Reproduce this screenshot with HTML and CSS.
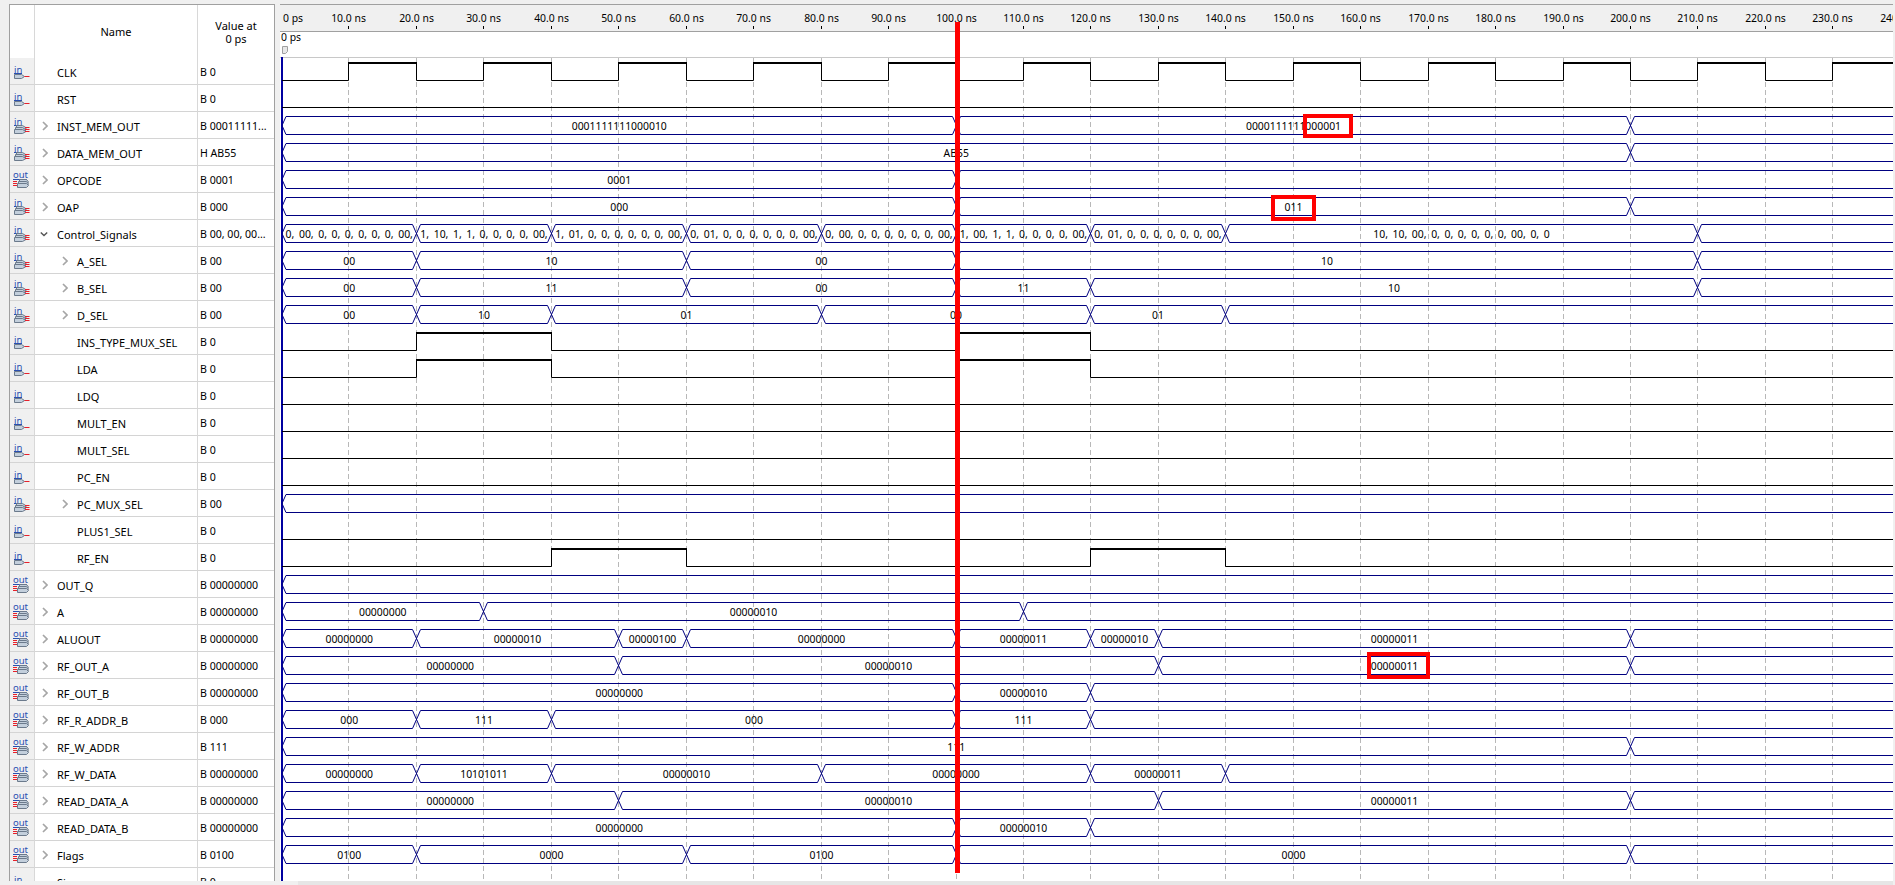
FILE: index.html
```html
<!DOCTYPE html>
<html lang="en">
<head>
  <meta charset="UTF-8">
  <title>Simulation Waveform Editor</title>
  <link rel="stylesheet" href="styles.css">
</head>
<body>

  <svg class="defs" aria-hidden="true">
    <symbol id="pin-in" viewBox="0 0 24 26">
      <text class="pin-text" x="4" y="15">in</text>
      <path class="pin-line" d="M4 15.500h8"/>
      <path class="pin-body" d="M4.500 16.500h7l3 2-3 2h-7z"/>
      <path class="pin-red" d="M14.500 18.500h5"/>
    </symbol>
    <symbol id="bus-in" viewBox="0 0 24 26">
      <text class="pin-text" x="4" y="12.500">in</text>
      <path class="pin-line" d="M4 13.500h8"/>
      <path class="pin-body" d="M6.500 13.500h6l4 2.500-4 2.500h-6z"/>
      <path class="pin-body" d="M5.500 15.500h7l3.500 2.500-3.500 2.500h-7z"/>
      <path class="pin-body" d="M4.500 17.500h8l3.500 2-3.500 2h-8z"/>
      <path class="pin-red" d="M15 15.500h4.500M15 17.500h4.500M15 19.500h4.500"/>
    </symbol>
    <symbol id="bus-out" viewBox="0 0 24 26">
      <text class="pin-text" x="3" y="12">out</text>
      <path class="pin-line" d="M3 13.500h14"/>
      <path class="pin-body" d="M9.500 13.500h7l2 2.500-2 2.500h-7z"/>
      <path class="pin-body" d="M8.500 15.500h8l2 2.500-2 2.500h-8z"/>
      <path class="pin-body" d="M7.500 17.500h9l2 2-2 2h-9z"/>
      <path class="pin-red" d="M3 15.500h4M3 17.500h4M3 19.500h4"/>
    </symbol>
    <symbol id="tw-right" viewBox="0 0 6 10">
      <path d="M1 1l4 4-4 4" fill="none" stroke="#a6a6a6" stroke-width="1.700"/>
    </symbol>
    <symbol id="tw-down" viewBox="0 0 10 6">
      <path d="M1 1l4 4 4-4" fill="none" stroke="#555" stroke-width="1.700"/>
    </symbol>
  </svg>

  <main class="editor">
    <section class="names">
      <header class="names-head">
        <div class="cell-icon"></div>
        <div class="cell-name">Name</div>
        <div class="cell-value">Value at<br>0 ps</div>
      </header>

      <div class="row"><div class="cell-icon"><svg><use href="#pin-in"/></svg></div><div class="cell-name"><i class="tw"></i>CLK</div><div class="cell-value">B 0</div></div>
      <div class="row"><div class="cell-icon"><svg><use href="#pin-in"/></svg></div><div class="cell-name"><i class="tw"></i>RST</div><div class="cell-value">B 0</div></div>
      <div class="row"><div class="cell-icon"><svg><use href="#bus-in"/></svg></div><div class="cell-name"><i class="tw"><svg><use href="#tw-right"/></svg></i>INST_MEM_OUT</div><div class="cell-value">B 00011111...</div></div>
      <div class="row"><div class="cell-icon"><svg><use href="#bus-in"/></svg></div><div class="cell-name"><i class="tw"><svg><use href="#tw-right"/></svg></i>DATA_MEM_OUT</div><div class="cell-value">H AB55</div></div>
      <div class="row"><div class="cell-icon"><svg><use href="#bus-out"/></svg></div><div class="cell-name"><i class="tw"><svg><use href="#tw-right"/></svg></i>OPCODE</div><div class="cell-value">B 0001</div></div>
      <div class="row"><div class="cell-icon"><svg><use href="#bus-in"/></svg></div><div class="cell-name"><i class="tw"><svg><use href="#tw-right"/></svg></i>OAP</div><div class="cell-value">B 000</div></div>
      <div class="row"><div class="cell-icon"><svg><use href="#bus-in"/></svg></div><div class="cell-name"><i class="tw tw-open"><svg><use href="#tw-down"/></svg></i>Control_Signals</div><div class="cell-value">B 00, 00, 00...</div></div>
      <div class="row"><div class="cell-icon"><svg><use href="#bus-in"/></svg></div><div class="cell-name sub"><i class="tw"><svg><use href="#tw-right"/></svg></i>A_SEL</div><div class="cell-value">B 00</div></div>
      <div class="row"><div class="cell-icon"><svg><use href="#bus-in"/></svg></div><div class="cell-name sub"><i class="tw"><svg><use href="#tw-right"/></svg></i>B_SEL</div><div class="cell-value">B 00</div></div>
      <div class="row"><div class="cell-icon"><svg><use href="#bus-in"/></svg></div><div class="cell-name sub"><i class="tw"><svg><use href="#tw-right"/></svg></i>D_SEL</div><div class="cell-value">B 00</div></div>
      <div class="row"><div class="cell-icon"><svg><use href="#pin-in"/></svg></div><div class="cell-name sub"><i class="tw"></i>INS_TYPE_MUX_SEL</div><div class="cell-value">B 0</div></div>
      <div class="row"><div class="cell-icon"><svg><use href="#pin-in"/></svg></div><div class="cell-name sub"><i class="tw"></i>LDA</div><div class="cell-value">B 0</div></div>
      <div class="row"><div class="cell-icon"><svg><use href="#pin-in"/></svg></div><div class="cell-name sub"><i class="tw"></i>LDQ</div><div class="cell-value">B 0</div></div>
      <div class="row"><div class="cell-icon"><svg><use href="#pin-in"/></svg></div><div class="cell-name sub"><i class="tw"></i>MULT_EN</div><div class="cell-value">B 0</div></div>
      <div class="row"><div class="cell-icon"><svg><use href="#pin-in"/></svg></div><div class="cell-name sub"><i class="tw"></i>MULT_SEL</div><div class="cell-value">B 0</div></div>
      <div class="row"><div class="cell-icon"><svg><use href="#pin-in"/></svg></div><div class="cell-name sub"><i class="tw"></i>PC_EN</div><div class="cell-value">B 0</div></div>
      <div class="row"><div class="cell-icon"><svg><use href="#bus-in"/></svg></div><div class="cell-name sub"><i class="tw"><svg><use href="#tw-right"/></svg></i>PC_MUX_SEL</div><div class="cell-value">B 00</div></div>
      <div class="row"><div class="cell-icon"><svg><use href="#pin-in"/></svg></div><div class="cell-name sub"><i class="tw"></i>PLUS1_SEL</div><div class="cell-value">B 0</div></div>
      <div class="row"><div class="cell-icon"><svg><use href="#pin-in"/></svg></div><div class="cell-name sub"><i class="tw"></i>RF_EN</div><div class="cell-value">B 0</div></div>
      <div class="row"><div class="cell-icon"><svg><use href="#bus-out"/></svg></div><div class="cell-name"><i class="tw"><svg><use href="#tw-right"/></svg></i>OUT_Q</div><div class="cell-value">B 00000000</div></div>
      <div class="row"><div class="cell-icon"><svg><use href="#bus-out"/></svg></div><div class="cell-name"><i class="tw"><svg><use href="#tw-right"/></svg></i>A</div><div class="cell-value">B 00000000</div></div>
      <div class="row"><div class="cell-icon"><svg><use href="#bus-out"/></svg></div><div class="cell-name"><i class="tw"><svg><use href="#tw-right"/></svg></i>ALUOUT</div><div class="cell-value">B 00000000</div></div>
      <div class="row"><div class="cell-icon"><svg><use href="#bus-out"/></svg></div><div class="cell-name"><i class="tw"><svg><use href="#tw-right"/></svg></i>RF_OUT_A</div><div class="cell-value">B 00000000</div></div>
      <div class="row"><div class="cell-icon"><svg><use href="#bus-out"/></svg></div><div class="cell-name"><i class="tw"><svg><use href="#tw-right"/></svg></i>RF_OUT_B</div><div class="cell-value">B 00000000</div></div>
      <div class="row"><div class="cell-icon"><svg><use href="#bus-out"/></svg></div><div class="cell-name"><i class="tw"><svg><use href="#tw-right"/></svg></i>RF_R_ADDR_B</div><div class="cell-value">B 000</div></div>
      <div class="row"><div class="cell-icon"><svg><use href="#bus-out"/></svg></div><div class="cell-name"><i class="tw"><svg><use href="#tw-right"/></svg></i>RF_W_ADDR</div><div class="cell-value">B 111</div></div>
      <div class="row"><div class="cell-icon"><svg><use href="#bus-out"/></svg></div><div class="cell-name"><i class="tw"><svg><use href="#tw-right"/></svg></i>RF_W_DATA</div><div class="cell-value">B 00000000</div></div>
      <div class="row"><div class="cell-icon"><svg><use href="#bus-out"/></svg></div><div class="cell-name"><i class="tw"><svg><use href="#tw-right"/></svg></i>READ_DATA_A</div><div class="cell-value">B 00000000</div></div>
      <div class="row"><div class="cell-icon"><svg><use href="#bus-out"/></svg></div><div class="cell-name"><i class="tw"><svg><use href="#tw-right"/></svg></i>READ_DATA_B</div><div class="cell-value">B 00000000</div></div>
      <div class="row"><div class="cell-icon"><svg><use href="#bus-out"/></svg></div><div class="cell-name"><i class="tw"><svg><use href="#tw-right"/></svg></i>Flags</div><div class="cell-value">B 0100</div></div>
      <div class="row"><div class="cell-icon"><svg><use href="#pin-in"/></svg></div><div class="cell-name"><i class="tw"></i>Sign</div><div class="cell-value">B 0</div></div>
    </section>

    <section class="waves">
      <svg id="chart" class="chart" viewBox="280 5 1613 876" width="1613" height="876"></svg>
      <div class="hscroll"><div class="hscroll-thumb"></div></div>
    </section>
  </main>

  <script src="waves.js"></script>

</body>
</html>
```

FILE: styles.css
```css
* {
  box-sizing: border-box;
}

html,
body {
  height: 100%;
  margin: 0;
  overflow: hidden;
}

body {
  background: #f0f0f0;
  color: #000;
  font-family: "Noto Sans", sans-serif;
  font-size: 11px;
}

.defs {
  display: none;
}

.editor {
  display: flex;
  gap: 5px;
  height: 885px;
  padding: 4px 0 0 9px;
}

/* left table */
.names {
  background: #fff;
  border-left: 1px solid #a0a0a0;
  border-right: 1px solid #a0a0a0;
  border-top: 1px solid #a0a0a0;
  flex: none;
  height: 877px;
  overflow: hidden;
  width: 266px;
}

.names-head {
  display: flex;
  height: 53px;
  text-align: center;
}

.names-head .cell-icon {
  background: #fff;
  border-bottom: 0;
}

.names-head .cell-name,
.names-head .cell-value {
  align-items: center;
  border-bottom: 0;
  display: flex;
  font-size: 11px;
  height: 100%;
  justify-content: center;
  line-height: 13px;
  padding: 0;
}

.row {
  display: flex;
  height: 27px;
}

.cell-icon {
  background: #f0f0f0;
  border-bottom: 1px solid #d4d4d4;
  border-right: 1px solid #d8d8d8;
  flex: none;
  width: 25px;
}

.cell-icon svg {
  display: block;
  height: 26px;
  width: 24px;
}

.cell-name {
  align-items: center;
  border-bottom: 1px solid #d4d4d4;
  border-right: 1px solid #d8d8d8;
  display: flex;
  flex: none;
  padding: 2px 0 0 7px;
  white-space: nowrap;
  width: 163px;
}

.cell-name.sub {
  padding-left: 27px;
}

.cell-value {
  align-items: center;
  border-bottom: 1px solid #d4d4d4;
  display: flex;
  flex: 1;
  font-size: 10.600px;
  padding: 2px 0 0 2px;
  white-space: nowrap;
}

.tw {
  align-items: center;
  display: flex;
  flex: none;
  height: 10px;
  margin-right: 9px;
  width: 6px;
}

.tw svg {
  display: block;
  height: 10px;
  width: 6px;
}

.tw-open svg {
  height: 6px;
  margin-left: -2px;
  width: 10px;
}

/* pin icons */
.pin-text {
  fill: #2a4fb0;
  font-family: "Noto Sans", sans-serif;
  font-size: 9.500px;
}

.pin-line {
  fill: none;
  stroke: #2a4fb0;
  stroke-width: 1;
}

.pin-body {
  fill: #c3cfdc;
  stroke: #6b7a8c;
  stroke-width: 1;
}

.pin-red {
  fill: none;
  stroke: #e8202a;
  stroke-width: 1;
}

/* wave panel */
.waves {
  background: #fff;
  border-top: 1px solid #a0a0a0;
  flex: none;
  height: 881px;
  overflow: hidden;
  width: 1613px;
}

.chart {
  display: block;
}

.hscroll {
  background: #f0f0f0;
  height: 4px;
  padding-left: 18px;
}

.hscroll-thumb {
  background: #e6e6e6;
  height: 4px;
}

.ruler-bg {
  fill: #f0f0f0;
}

.ruler-line {
  stroke: #a0a0a0;
}

.cursor-line {
  stroke: #c8c8c8;
}

.tick {
  stroke: #000;
}

.grid {
  stroke: #b8b8b8;
  stroke-dasharray: 5 3;
}

.time-axis {
  stroke: #0000a0;
  stroke-width: 2;
}

.label {
  fill: #000;
  font-family: "Noto Sans", sans-serif;
  font-size: 10.400px;
}

.label-list {
  word-spacing: 1.900px;
}

.bit {
  fill: none;
  stroke: #000;
}

.bit-high {
  fill: none;
  stroke: #000;
  stroke-width: 2;
}

.bus {
  fill: none;
  stroke: #000080;
}

.marker {
  fill: #e8e8e8;
  stroke: #a0a0a0;
}

.red-line {
  fill: #f00;
}

.red-box {
  fill: none;
  stroke: #f00;
  stroke-width: 4;
}
```

FILE: waves.js
```js
const svg = document.getElementById('chart');
const NS = 'http://www.w3.org/2000/svg';
const LEFT = 282, RIGHT = 1893, TOP = 58, PITCH = 27;

function tx(ns) {
  return Math.round(281 + 6.745 * ns) + 0.5;
}

function add(name, attrs, text) {
  const node = document.createElementNS(NS, name);
  for (const key in attrs) node.setAttribute(key, attrs[key]);
  if (text) node.textContent = text;
  svg.appendChild(node);
  return node;
}

// bit signals: list of [from, to] ns where the signal is high
function bit(row, highs) {
  const y0 = TOP + PITCH * row;
  let x = LEFT, low = '';
  for (const [a, b] of highs) {
    const xa = tx(a), xb = tx(b);
    low += `M${x} ${y0 + 22.5}H${xa}V${y0 + 5}`;
    low += `M${xb} ${y0 + 5}V${y0 + 22.5}`;
    add('path', { class: 'bit-high', d: `M${xa - 0.5} ${y0 + 5}H${xb + 0.5}` });
    x = xb;
  }
  low += `M${x} ${y0 + 22.5}H${RIGHT}`;
  add('path', { class: 'bit', d: low });
}

// bus signals: list of [from, to, label]; to = null runs off the right edge
function bus(row, segs) {
  const y0 = TOP + PITCH * row;
  const t = y0 + 4.5, b = y0 + 22.5, m = y0 + 13.5;
  let d = `M${LEFT} ${m}L${LEFT + 4} ${t}M${LEFT} ${m}L${LEFT + 4} ${b}`;
  segs.forEach(([from, to, label], i) => {
    const xa = from === 0 ? LEFT : tx(from);
    const xb = to === null ? RIGHT : tx(to);
    const right = to === null ? RIGHT : xb - 4;
    d += `M${xa + 4} ${t}H${right}M${xa + 4} ${b}H${right}`;
    if (to !== null) {
      d += `M${xb - 4} ${t}L${xb + 4} ${b}M${xb - 4} ${b}L${xb + 4} ${t}`;
    }
    if (!label) return;
    const list = label.includes(',') ? ' label-list' : '';
    add('text', { class: 'label' + list, x: (xa + xb) / 2, y: y0 + 17.5, 'text-anchor': 'middle' }, label);
  });
  add('path', { class: 'bus', d });
}

// header and grid
add('rect', { class: 'ruler-bg', x: 280, y: 5, width: 1613, height: 26 });
add('path', { class: 'ruler-line', d: 'M280 31.500H1893' });
add('path', { class: 'cursor-line', d: 'M280 57.500H1893' });
add('text', { class: 'label', x: 283, y: 22 }, '0 ps');
add('text', { class: 'label', x: 281, y: 41 }, '0 ps');
add('path', { class: 'marker', d: 'M282.500 46.500h5v5l-2 2h-3z' });
for (let ns = 10; ns <= 240; ns += 10) {
  const x = tx(ns);
  add('text', { class: 'label', x, y: 22, 'text-anchor': 'middle' }, ns.toFixed(1) + ' ns');
  add('path', { class: 'tick', d: `M${x} 26V29` });
  add('path', { class: 'grid', d: `M${x} 58V881` });
}
add('path', { class: 'time-axis', d: 'M282 57V881' });

// CLK
const clk = [];
for (let ns = 10; ns < 240; ns += 20) clk.push([ns, ns + 10]);
bit(0, clk);
bit(1, []);

const CS = {
  a: '0, 00, 0, 0, 0, 0, 0, 0, 00,',
  b: '1, 10, 1, 1, 0, 0, 0, 0, 00,',
  c: '1, 01, 0, 0, 0, 0, 0, 0, 00,',
  d: '0, 01, 0, 0, 0, 0, 0, 0, 00,',
  e: '1, 00, 1, 1, 0, 0, 0, 0, 00,',
};

bus(2, [[0, 100, '0001111111000010'], [100, 200, '0000111111000001'], [200, null]]);
bus(3, [[0, 200, 'AB55'], [200, null]]);
bus(4, [[0, 100, '0001'], [100, null]]);
bus(5, [[0, 100, '000'], [100, 200, '011'], [200, null]]);
bus(6, [
  [0, 20, CS.a], [20, 40, CS.b], [40, 60, CS.c], [60, 80, CS.d],
  [80, 100, CS.a], [100, 120, CS.e], [120, 140, CS.d],
  [140, 210, '10, 10, 00, 0, 0, 0, 0, 0, 0, 00, 0, 0'], [210, null],
]);
bus(7, [[0, 20, '00'], [20, 60, '10'], [60, 100, '00'], [100, 210, '10'], [210, null]]);
bus(8, [[0, 20, '00'], [20, 60, '11'], [60, 100, '00'], [100, 120, '11'], [120, 210, '10'], [210, null]]);
bus(9, [[0, 20, '00'], [20, 40, '10'], [40, 80, '01'], [80, 120, '00'], [120, 140, '01'], [140, null]]);
bit(10, [[20, 40], [100, 120]]);
bit(11, [[20, 40], [100, 120]]);
bit(12, []);
bit(13, []);
bit(14, []);
bit(15, []);
bus(16, [[0, null]]);
bit(17, []);
bit(18, [[40, 60], [120, 140]]);
bus(19, [[0, null]]);
bus(20, [[0, 30, '00000000'], [30, 110, '00000010'], [110, null]]);
bus(21, [
  [0, 20, '00000000'], [20, 50, '00000010'], [50, 60, '00000100'], [60, 100, '00000000'],
  [100, 120, '00000011'], [120, 130, '00000010'], [130, 200, '00000011'], [200, null],
]);
bus(22, [[0, 50, '00000000'], [50, 130, '00000010'], [130, 200, '00000011'], [200, null]]);
bus(23, [[0, 100, '00000000'], [100, 120, '00000010'], [120, null]]);
bus(24, [[0, 20, '000'], [20, 40, '111'], [40, 100, '000'], [100, 120, '111'], [120, null]]);
bus(25, [[0, 200, '111'], [200, null]]);
bus(26, [
  [0, 20, '00000000'], [20, 40, '10101011'], [40, 80, '00000010'], [80, 120, '00000000'],
  [120, 140, '00000011'], [140, null],
]);
bus(27, [[0, 50, '00000000'], [50, 130, '00000010'], [130, 200, '00000011'], [200, null]]);
bus(28, [[0, 100, '00000000'], [100, 120, '00000010'], [120, null]]);
bus(29, [[0, 20, '0100'], [20, 60, '0000'], [60, 100, '0100'], [100, 200, '0000'], [200, null]]);
bit(30, []);

// annotations drawn on top of the screenshot
add('rect', { class: 'red-line', x: 955, y: 22, width: 5, height: 851 });
add('rect', { class: 'red-box', x: 1305, y: 116, width: 46, height: 20 });
add('rect', { class: 'red-box', x: 1273, y: 197, width: 41, height: 22 });
add('rect', { class: 'red-box', x: 1369, y: 654, width: 59, height: 23 });
```
